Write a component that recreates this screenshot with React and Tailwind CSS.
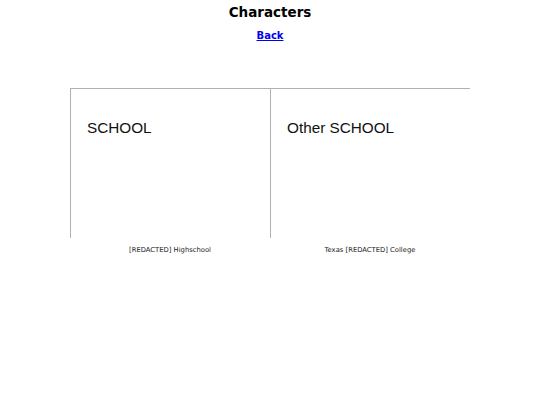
import React from "react";

const schools = [
  { name: "SCHOOL", caption: "[REDACTED] Highschool" },
  { name: "Other SCHOOL", caption: "Texas [REDACTED] College" },
];

const App = () => {
  return (
    <div className="bg-white min-h-[405px] font-['DejaVu_Sans',sans-serif] text-black">
      {/* Header */}
      <div className="flex flex-col items-center pt-[4px]">
        <h1 className="text-[13.5px] font-bold leading-[16px]">Characters</h1>
        <a href="#" className="mt-[10px] text-[10px] font-bold leading-[12px] text-[#0000ee] underline">
          Back
        </a>
      </div>

      {/* School cards */}
      <div className="mx-auto mt-[46px] w-[400px] grid grid-cols-2">
        {schools.map((s) => (
          <div key={s.name} className="flex flex-col">
            <div className="h-[150px] border-t border-l border-[#b0b0b0] pl-[16px] pt-[30px]">
              <div className="font-['Liberation_Sans',Arial,sans-serif] text-[15.3px] leading-[18px] text-[#111]">
                {s.name}
              </div>
            </div>
            <div className="text-center text-[6.8px] leading-[9px] mt-[8px] text-[#222]">{s.caption}</div>
          </div>
        ))}
      </div>
    </div>
  );
};

export default App;
